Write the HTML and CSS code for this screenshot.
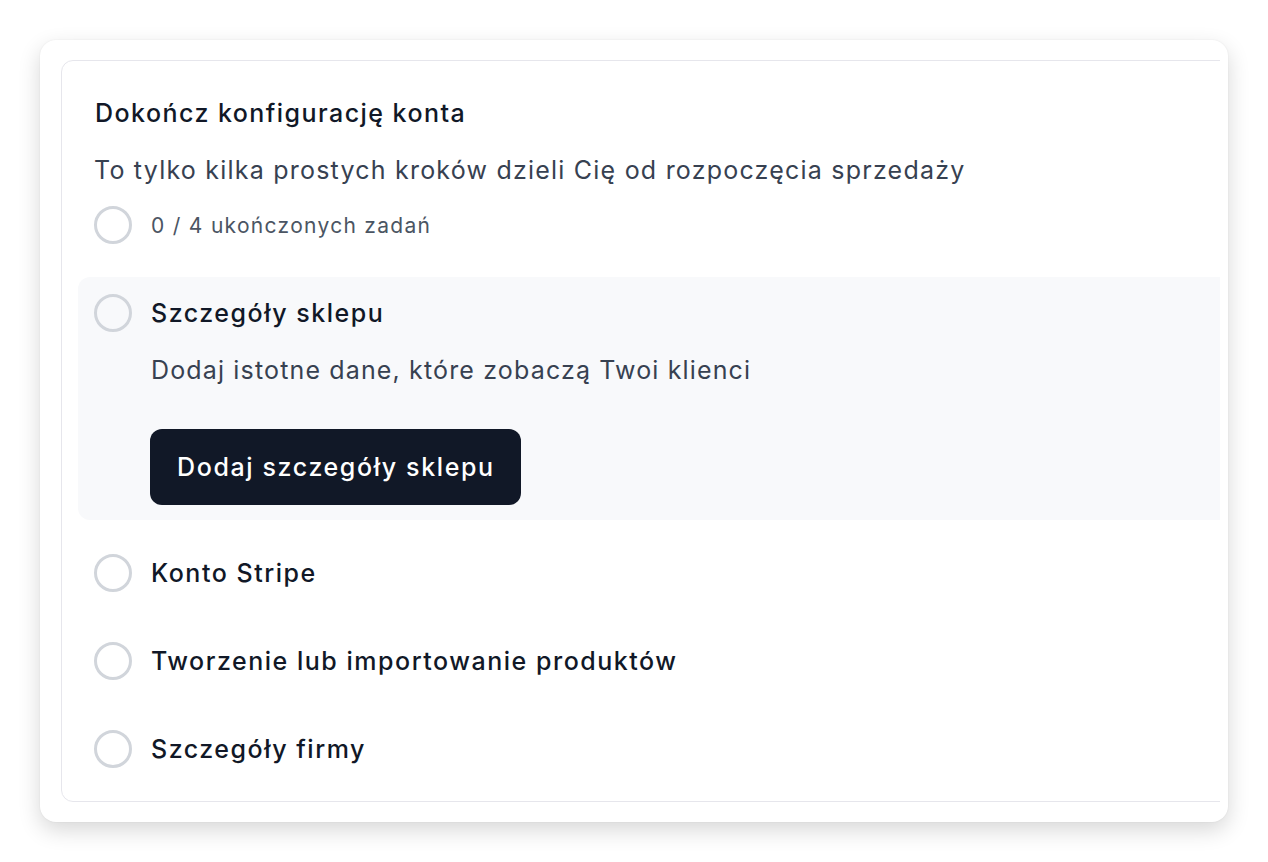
FILE: index.html
```html
<!DOCTYPE html>
<html lang="pl">
<head>
<meta charset="utf-8">
<title>Dokończ konfigurację konta</title>
<link rel="stylesheet" href="styles.css">
</head>
<body>
<div class="outer">
  <div class="clip">
    <div class="card">
      <h1 class="title">Dokończ konfigurację konta</h1>
      <p class="subtitle">To tylko kilka prostych kroków dzieli Cię od rozpoczęcia sprzedaży</p>
      <div class="progress">
        <span class="circle"></span>
        <span class="progress-text">0 / 4 ukończonych zadań</span>
      </div>
      <div class="steps">
        <div class="step active">
          <div class="step-head">
            <span class="circle"></span>
            <span class="step-title">Szczegóły sklepu</span>
          </div>
          <div class="step-body">
            <p class="step-desc">Dodaj istotne dane, które zobaczą Twoi klienci</p>
            <button class="btn">Dodaj szczegóły sklepu</button>
          </div>
        </div>
        <div class="step">
          <div class="step-head">
            <span class="circle"></span>
            <span class="step-title">Konto Stripe</span>
          </div>
        </div>
        <div class="step">
          <div class="step-head">
            <span class="circle"></span>
            <span class="step-title">Tworzenie lub importowanie produktów</span>
          </div>
        </div>
        <div class="step">
          <div class="step-head">
            <span class="circle"></span>
            <span class="step-title">Szczegóły firmy</span>
          </div>
        </div>
      </div>
    </div>
  </div>
</div>
</body>
</html>
```
FILE: styles.css
```css
* { box-sizing: border-box; }
html, body { margin: 0; padding: 0; background: #ffffff; }
body {
  font-family: Inter, "Noto Sans", "Liberation Sans", sans-serif;
  color: #111827;
  padding: 40px;
}
.outer {
  width: 1188px;
  height: 782px;
  background: #fff;
  border-radius: 16px;
  padding: 20px 8px 20px 21px;
  box-shadow: 0 8px 22px rgba(0,0,0,0.16), 0 0 2px rgba(0,0,0,0.07);
}
.clip {
  overflow: hidden;
  height: 100%;
}
.card {
  width: calc(100% + 40px);
  height: 100%;
  border: 1px solid #e6e6ec;
  border-radius: 12px;
  padding: 36px 16px 0 16px;
}
.title {
  margin: 0 0 25px 17px;
  font-size: 25px;
  line-height: 32px;
  font-weight: 500;
  letter-spacing: 1.45px;
  color: #111827;
}
.subtitle {
  margin: 0 0 20px 16px;
  font-size: 25px;
  line-height: 32px;
  letter-spacing: 1.22px;
  color: #374151;
}
.progress {
  display: flex;
  align-items: center;
  gap: 19px;
  margin-left: 16px;
}
.circle {
  width: 38px;
  height: 38px;
  flex: none;
  border-radius: 50%;
  border: 3px solid #d1d5db;
}
.progress-text {
  font-size: 21px;
  letter-spacing: 1.3px;
  color: #4b5563;
}
.steps {
  margin-top: 33px;
  display: flex;
  flex-direction: column;
  gap: 50px;
}
.step {
  padding: 0 16px;
  border-radius: 12px;
}
.step.active {
  background: #f8f9fb;
  padding: 17px 16px 15px;
  margin-bottom: -16px;
}
.step-head {
  display: flex;
  align-items: center;
  gap: 19px;
}
.step-title {
  font-size: 25px;
  font-weight: 500;
  letter-spacing: 1.52px;
  color: #111827;
}
.step-body {
  padding-left: 57px;
}
.step-desc {
  margin: 22px 0 43px;
  font-size: 25px;
  line-height: 32px;
  letter-spacing: 1.15px;
  color: #374151;
}
.btn {
  display: block;
  margin-left: -1px;
  font-family: inherit;
  font-size: 25px;
  font-weight: 500;
  letter-spacing: 1.62px;
  color: #fff;
  background: #111827;
  border: none;
  border-radius: 12px;
  height: 76px;
  padding: 0 26px 0 27px;
}
```
